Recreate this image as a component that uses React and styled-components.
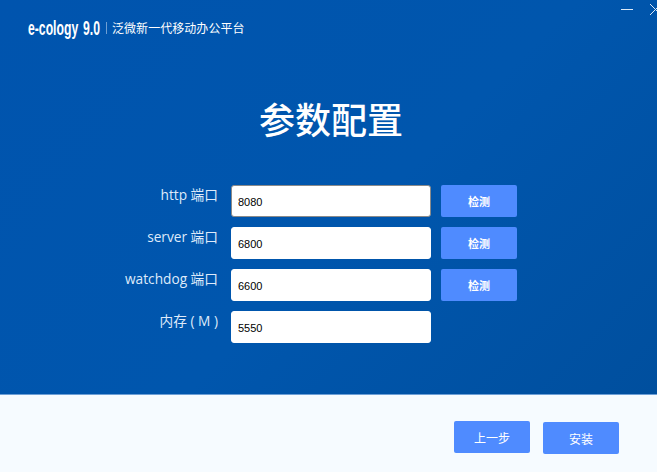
import React from "react";
import styled, { createGlobalStyle } from "styled-components";

const Global = createGlobalStyle`
  html, body { margin: 0; padding: 0; background: #f6fbff; }
  body { font-family: "Noto Sans CJK SC", "Liberation Sans", sans-serif; overflow: hidden; }
`;
const Page = styled.div`
  width: 657px; height: 472px; display: flex; flex-direction: column; overflow: hidden;
`;
const Top = styled.div`
  height: 395px; flex: none; box-sizing: border-box;
  background: linear-gradient(135deg, #0054ae 0%, #0056ad 55%, #004f9e 100%);
  border-bottom: 1px solid #6d9fd6;
  display: flex; flex-direction: column;
`;
const WindowBar = styled.div`
  height: 0; width: 60px; margin-left: 620px; display: flex; gap: 15px;
`;
const WinIcon = styled.svg`
  flex: none; width: 14px; height: 18px; color: #dce9f7;
`;
const Brand = styled.div`
  display: flex; align-items: center; height: 16px; margin: 20px 0 0 28px; color: #fff;
`;
const Logo = styled.span`
  font: bold 20px/16px "Liberation Sans", sans-serif; white-space: nowrap; word-spacing: 2.5px;
  display: inline-block; width: 72px; transform: scaleX(0.61); transform-origin: left center;
`;
const Bar = styled.i`
  display: block; width: 1px; height: 12px; background: #6f9fd3; margin: 0 5px 0 6px;
`;
const Slogan = styled.span`
  font-size: 12px; line-height: 14px; color: #fff; white-space: nowrap; letter-spacing: 0.05px;
`;
const Title = styled.h1`
  margin: 57px 0 0 5px; font-size: 36px; line-height: 50px; font-weight: 500; color: #fff; text-align: center;
`;
const Form = styled.div`
  margin-top: 42px; display: grid; grid-template-columns: 231px 210px 76px; row-gap: 10px;
  grid-auto-rows: 32px;
`;
const Label = styled.label`
  box-sizing: border-box; padding-right: 13px; text-align: right; white-space: nowrap; color: #dfeafa;
  font: 13.7px/20px "Open Sans", "Noto Sans CJK SC", sans-serif;
`;
const Field = styled.input`
  box-sizing: border-box; width: 200px; height: 32px; padding: 2px 6px 0 6px;
  background: #fff; color: #000; outline: none;
  font: 11px "Liberation Sans", Arial, sans-serif;
  border: 1px solid ${p => (p.$active ? "#8a8a8a" : "#fff")}; border-radius: 3px;
`;
const Check = styled.button`
  width: 76px; height: 32px; border: 0; border-radius: 2px; background: #4f8bff; color: #fff; padding: 0;
  font: 700 11px "Noto Sans CJK SC", sans-serif;
`;
const Bottom = styled.div`
  flex: 1; background: #f6fbff; display: flex; align-items: flex-start; padding: 26px 38px 0 454px; gap: 13px;
`;
const Action = styled.button`
  width: 76px; height: 32px; border: 0; border-radius: 2px; background: #4f8bff; color: #fff; padding: 0;
  font: 12px "Noto Sans CJK SC", sans-serif; flex: none;
  margin-top: ${p => p.$drop || 0}px;
`;

const rows = [
  ["http 端口", "8080", true],
  ["server 端口", "6800", true],
  ["watchdog 端口", "6600", true],
  ["内存 ( M )", "5550", false],
];

export default function App() {
  return (
    <Page>
      <Global />
      <Top>
        <WindowBar>
          <WinIcon viewBox="0 0 14 18"><path d="M1 9.5h12" stroke="currentColor" strokeWidth="1" fill="none" /></WinIcon>
          <WinIcon viewBox="0 0 14 18"><path d="M1 4l11 11M12 4L1 15" stroke="currentColor" strokeWidth="1" fill="none" /></WinIcon>
        </WindowBar>
        <Brand>
          <Logo>e-cology 9.0</Logo>
          <Bar />
          <Slogan>泛微新一代移动办公平台</Slogan>
        </Brand>
        <Title>参数配置</Title>
        <Form>
          {rows.map(([label, value, hasCheck], i) => (
            <React.Fragment key={label}>
              <Label>{label}</Label>
              <Field defaultValue={value} $active={i === 0} />
              {hasCheck ? <Check>检测</Check> : <span />}
            </React.Fragment>
          ))}
        </Form>
      </Top>
      <Bottom>
        <Action>上一步</Action>
        <Action $drop={1}>安装</Action>
      </Bottom>
    </Page>
  );
}
